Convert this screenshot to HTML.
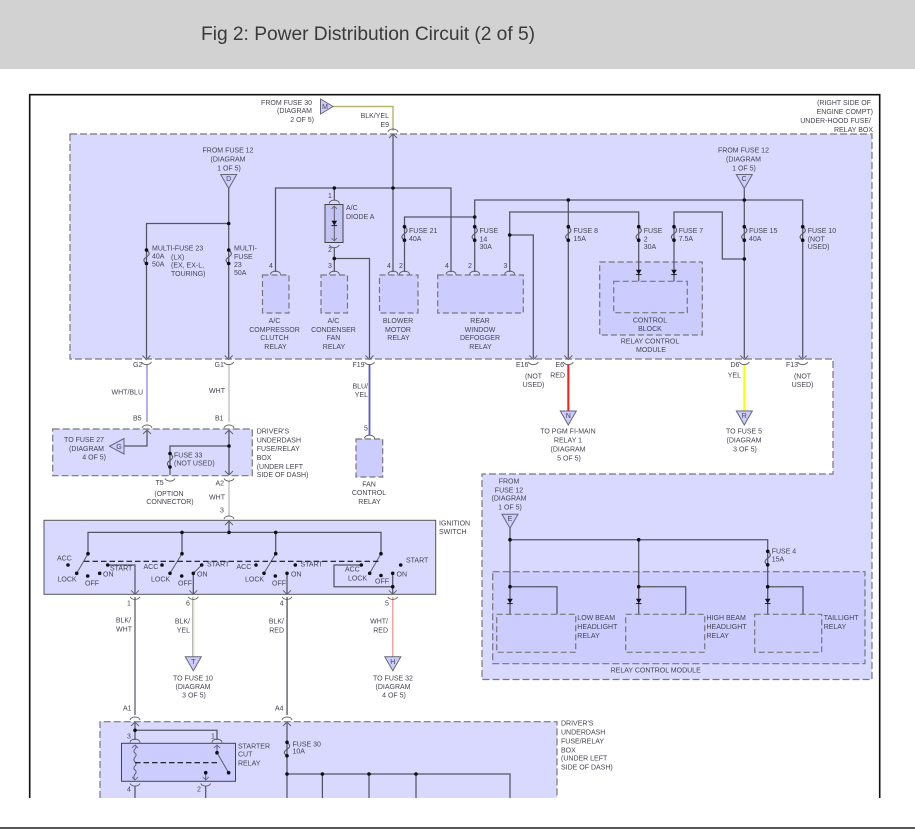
<!DOCTYPE html>
<html><head><meta charset="utf-8"><title>Fig 2: Power Distribution Circuit (2 of 5)</title>
<style>
html,body{margin:0;padding:0;background:#fff;width:915px;height:829px;overflow:hidden}
svg{display:block;filter:blur(.25px)}
text{font-family:"Liberation Sans",Arial,sans-serif;font-size:7px;fill:#444452}
.m{text-anchor:middle}.e{text-anchor:end}
.w{fill:none;stroke:#555561;stroke-width:1.25}
.t{fill:none;stroke:#5c5c6a;stroke-width:1}
.d{stroke:#777;stroke-width:1.2;stroke-dasharray:7 3}
</style></head><body>
<svg width="915" height="829" viewBox="0 0 915 829" xmlns="http://www.w3.org/2000/svg">
<defs>
<g id="up" fill="none" stroke="#5c5c68" stroke-width=".9"><path d="M-5,-2 C-4,-6 4,-6 5,-2"/><path d="M-4,4 L0,0 L4,4"/></g>
<g id="dn" fill="none" stroke="#5c5c68" stroke-width=".9"><path d="M-4,-4 L0,0 L4,-4"/><path d="M-5,2.5 C-3,6 3,6 5,2.5"/></g>
<path id="pin" fill="none" stroke="#5c5c68" stroke-width=".9" d="M-5,3 C-5,-1.5 5,-1.5 5,3"/>
<path id="arcd" fill="none" stroke="#5c5c68" stroke-width=".9" d="M-5,0 C-3,3.5 3,3.5 5,0"/>
<g id="fuse"><path d="M0,0 C4,3 3,5 0,7 C-3,9 -4,11 0,13.5" fill="none" stroke="#5c5c68" stroke-width="1.1"/><circle cx="0" cy="0" r="1.8" fill="#111"/><circle cx="0" cy="13.5" r="1.8" fill="#111"/></g>
<g id="dio"><path d="M-2.8,-2.2 H2.8 L0,2.4Z" fill="#111"/><path d="M-2.8,2.6 H2.8" stroke="#111" stroke-width=".9"/></g>
<path id="tri" d="M-8,0 H8 L0,14Z" fill="#ccccff" stroke="#666674" stroke-width="1"/>
</defs>

<rect x="0" y="0" width="915" height="69" fill="#d2d2d2"/>
<text x="201" y="40" textLength="334" style="font-size:19.2px;fill:#3a3a3a">Fig 2: Power Distribution Circuit (2 of 5)</text>

<rect x="0" y="827" width="915" height="2" fill="#555"/>
<path d="M29.7,798 V94.7 H879.7 V798" fill="none" stroke="#111" stroke-width="1.6"/>

<!-- big shaded boxes -->
<path d="M70,134 H872 V679.5 H482 V474 H833 V359 H70Z" fill="#d9d9ff" class="d"/>
<rect x="52.7" y="429" width="199.6" height="46.7" fill="#d9d9ff" class="d"/>
<rect x="44" y="520.3" width="391.7" height="74" fill="#d9d9ff" stroke="#555" stroke-width="1"/>
<path d="M100,798 V721.7 H557 V798Z" fill="#d9d9ff" stroke="none"/>
<path d="M100,798 V721.7 H557 V798" fill="none" class="d"/>
<rect x="492.7" y="571.7" width="372.3" height="92" fill="#ccccff" class="d"/>

<!-- relay boxes -->
<g fill="#ccccff" class="d" style="stroke-dasharray:6 3">
<rect x="262.5" y="275" width="26.5" height="38"/>
<rect x="321" y="275" width="26.5" height="38"/>
<rect x="379.5" y="275" width="38.5" height="38"/>
<rect x="437.7" y="275" width="85.6" height="38"/>
<rect x="599.7" y="262" width="102.6" height="73"/>
<rect x="613.7" y="281.3" width="73.6" height="31.4"/>
<rect x="356" y="439" width="26.7" height="38"/>
<rect x="496.7" y="614.3" width="79" height="38"/>
<rect x="625.7" y="614.3" width="79" height="38"/>
<rect x="754.7" y="614.3" width="67" height="38"/>
</g>
<rect x="325" y="204.5" width="18" height="38" fill="#c4c4f4" stroke="#444" stroke-width="1"/>
<rect x="121.5" y="743.3" width="114" height="38" fill="#ccccff" stroke="#444" stroke-width="1"/>

<!-- colored wires -->
<path d="M333,106.5 H393 V131" fill="none" stroke="#6a6a50" stroke-width="1.2"/>
<path d="M333,106.5 H393 V131" fill="none" stroke="#ffff80" stroke-width=".5"/>
<path d="M147,365 V422" stroke="#9b9bee" stroke-width="1.6" fill="none"/>
<path d="M229,365 V422 M229,481 V516" stroke="#cfcfcf" stroke-width="1.8" fill="none"/>
<path d="M369.5,365 V435" stroke="#5555dd" stroke-width="1.8" fill="none"/>
<path d="M568.3,365 V411" stroke="#ff1a1a" stroke-width="2" fill="none"/>
<path d="M744.3,365 V411" stroke="#ffff00" stroke-width="2" fill="none"/>
<path d="M135,597 V715" stroke="#8d8d94" stroke-width="1.8" fill="none"/>
<path d="M193.3,597 V657" stroke="#77776a" stroke-width="1.6" fill="none"/>
<path d="M193.6,597 V657" stroke="#ffff66" stroke-width=".9" fill="none"/>
<path d="M287,597 V715" stroke="#8d8d94" stroke-width="1.8" fill="none"/>
<path d="M287.4,597 V715" stroke="#e24a4a" stroke-width=".7" fill="none"/>
<path d="M392.8,597 V657" stroke="#e89090" stroke-width="1.2" fill="none"/>

<!-- black wires -->
<g class="w">
<path d="M393,134 V272 M275.5,272 V188 H451 V272"/>
<path d="M334.3,188 V200 M334.3,248 V272 M334.3,258.5 H369.5 V358"/>
<path d="M404.5,272 V217 H474.7 M474.7,272 V200 H802.7 V358"/>
<path d="M509.7,272 V212 H638.7 V281.3 M509.7,235 H533.3 V358"/>
<path d="M568.3,200 V358 M674,281.3 V212 H722.3 V259 H744.3 M744.3,188 V358"/>
<path d="M228.7,188 V358 M228.7,223.5 H146.5 V358"/>
<path d="M147,430 V446 H124 M229,430 V475 M229,446 H170 V475"/>
<path d="M229,521 V532.4 M88,553.7 V532.4 H381 V553.7 M182,532.4 V553.7 M275.7,532.4 V553.7"/>
<path d="M107.7,565 H135 V594 M193.3,573.3 V594 M287,573.3 V594 M392.7,573.3 V594"/>
<path d="M361.3,565 H334 V586.7 H392.7"/>
<path d="M510,528 V614.3 M510,539.7 H767.7 V614.3 M638.7,539.7 V614.3"/>
<path d="M510,586.7 H557 V614.3 M638.7,586.7 H685.7 V614.3 M767.7,586.7 H803 V614.3"/>
<path d="M135,723 V740 M135,730.3 H217 V740 M135,786 V798 M205.7,786 V798"/>
<path d="M287,723 V798 M287,774 H510 V798 M322.4,774 V798 M369,774 V798 M416,774 V798"/>
</g>
<g class="t">
<path d="M334.3,207 V240"/>
<path d="M76.7,573.3 L88,553.7 M170,573.3 L182,553.7 M264,573.3 L275.7,553.7 M369.7,573.3 L381,553.7 M193.3,573.3 L201.7,565"/>
<path d="M217,746 V752.7 L228.6,772.7 M205.7,772.7 V780"/>
<path d="M135,745 C139,748 131,750 135,753 C139,756 131,758 135,762 C139,765 131,767 135,770 C139,773 131,775 135,780"/>
</g>
<path d="M84,561.3 H380" stroke="#111" stroke-width="1.1" stroke-dasharray="5.5 3" fill="none"/>
<path d="M135,762.7 H220" stroke="#111" stroke-width="1.1" stroke-dasharray="5.5 3" fill="none"/>

<!-- triangles -->
<path d="M320.5,99 L333,106.5 L320.5,114Z" fill="#ccccff" stroke="#666674"/>
<path d="M124,438.5 L109.5,446.3 L124,454Z" fill="#ccccff" stroke="#666674"/>
<use href="#tri" x="228.7" y="174.5"/><use href="#tri" x="744.3" y="174.5"/>
<use href="#tri" x="568.3" y="411"/><use href="#tri" x="744.3" y="411"/>
<use href="#tri" x="510" y="514.3"/><use href="#tri" x="193.3" y="656.7"/><use href="#tri" x="392.8" y="656.7"/>

<!-- connectors -->
<use href="#up" x="393" y="134"/>
<use href="#pin" x="275.5" y="271.5"/><use href="#pin" x="334.3" y="271.5"/><use href="#pin" x="393" y="271.5"/><use href="#pin" x="404.5" y="271.5"/><use href="#pin" x="451" y="271.5"/><use href="#pin" x="474.7" y="271.5"/><use href="#pin" x="509.7" y="271.5"/>
<use href="#pin" x="334.3" y="200.5"/><use href="#arcd" x="334.3" y="245"/>
<path d="M331.5,209 L334.3,206 L337,209 M331.5,238 L334.3,241 L337,238" fill="none" stroke="#5c5c68" stroke-width=".8"/>
<use href="#dn" x="146.5" y="359.5"/><use href="#dn" x="228.7" y="359.5"/><use href="#dn" x="369.5" y="359.5"/><use href="#dn" x="533.3" y="359.5"/><use href="#dn" x="568.3" y="359.5"/><use href="#dn" x="744.3" y="359.5"/><use href="#dn" x="802.7" y="359.5"/>
<use href="#up" x="147" y="430"/><use href="#up" x="229" y="430"/>
<use href="#pin" x="369.5" y="435.5"/>
<path d="M225,471 L229,475 L233,471" fill="none" stroke="#5c5c68" stroke-width=".9"/>
<use href="#arcd" x="170" y="478.5"/><use href="#arcd" x="229" y="478.5"/>
<use href="#up" x="229" y="521"/>
<use href="#dn" x="135" y="594.3"/><use href="#dn" x="193.3" y="594.3"/><use href="#dn" x="287" y="594.3"/><use href="#dn" x="392.8" y="594.3"/>
<use href="#up" x="135" y="722"/><use href="#up" x="287" y="722"/>
<use href="#pin" x="135" y="739.5"/><use href="#pin" x="217" y="739.5"/>
<path d="M132,748 L135,745 L138,748 M214,748 L217,745 L220,748 M132,777 L135,780 L138,777 M202.7,777 L205.7,780 L208.7,777" fill="none" stroke="#5c5c68" stroke-width=".8"/>
<use href="#arcd" x="135" y="783.5"/><use href="#arcd" x="205.7" y="783.5"/>

<!-- fuses -->
<use href="#fuse" x="146.5" y="250"/><use href="#fuse" x="228.7" y="250"/>
<use href="#fuse" x="404.5" y="226.7"/><use href="#fuse" x="474.7" y="226.7"/><use href="#fuse" x="568.3" y="226.7"/><use href="#fuse" x="638.7" y="226.7"/><use href="#fuse" x="674" y="226.7"/><use href="#fuse" x="744.3" y="226.7"/><use href="#fuse" x="802.7" y="226.7"/>
<use href="#fuse" x="170" y="453.5"/><use href="#fuse" x="767.7" y="551.3"/><use href="#fuse" x="287" y="742.3"/>

<!-- diodes -->
<use href="#dio" x="334.3" y="223"/><use href="#dio" x="638.7" y="272"/><use href="#dio" x="674" y="272"/>
<use href="#dio" x="510" y="601"/><use href="#dio" x="638.7" y="601"/><use href="#dio" x="767.7" y="601"/>

<!-- dots -->
<g fill="#111">
<circle cx="334.3" cy="188" r="1.8"/><circle cx="393" cy="188" r="1.8"/><circle cx="334.3" cy="258.5" r="1.8"/>
<circle cx="228.7" cy="223.5" r="1.8"/><circle cx="474.7" cy="217" r="1.8"/><circle cx="568.3" cy="200" r="1.8"/><circle cx="744.3" cy="200" r="1.8"/><circle cx="509.7" cy="235" r="1.8"/><circle cx="744.3" cy="259" r="1.8"/>
<circle cx="229" cy="446" r="1.8"/>
<circle cx="182" cy="532.4" r="1.8"/><circle cx="229" cy="532.4" r="1.8"/><circle cx="275.7" cy="532.4" r="1.8"/>
<circle cx="88" cy="553.7" r="1.8"/><circle cx="182" cy="553.7" r="1.8"/><circle cx="275.7" cy="553.7" r="1.8"/><circle cx="381" cy="553.7" r="1.8"/>
<circle cx="68" cy="565" r="1.8"/><circle cx="76.7" cy="573.3" r="1.8"/><circle cx="87.7" cy="576" r="1.8"/><circle cx="99.7" cy="573.3" r="1.8"/><circle cx="107.7" cy="565" r="1.8"/>
<circle cx="162" cy="565" r="1.8"/><circle cx="170" cy="573.3" r="1.8"/><circle cx="181.7" cy="576" r="1.8"/><circle cx="193.3" cy="573.3" r="1.8"/><circle cx="201.7" cy="565" r="1.8"/>
<circle cx="256" cy="565" r="1.8"/><circle cx="264" cy="573.3" r="1.8"/><circle cx="275.3" cy="576" r="1.8"/><circle cx="287" cy="573.3" r="1.8"/><circle cx="295.3" cy="565" r="1.8"/>
<circle cx="361.3" cy="565" r="1.8"/><circle cx="369.7" cy="573.3" r="1.8"/><circle cx="381" cy="575.5" r="1.8"/><circle cx="392.7" cy="573.3" r="1.8"/><circle cx="392.7" cy="586.7" r="1.8"/><circle cx="400.7" cy="565" r="1.8"/>
<circle cx="510" cy="539.7" r="1.8"/><circle cx="638.7" cy="539.7" r="1.8"/><circle cx="510" cy="586.7" r="1.8"/><circle cx="638.7" cy="586.7" r="1.8"/><circle cx="767.7" cy="586.7" r="1.8"/>
<circle cx="135" cy="730.3" r="1.8"/><circle cx="217" cy="752.7" r="1.8"/><circle cx="228.6" cy="772.7" r="1.8"/><circle cx="205.7" cy="772.7" r="1.8"/>
<circle cx="287" cy="774" r="1.8"/><circle cx="322.4" cy="774" r="1.8"/><circle cx="369" cy="774" r="1.8"/><circle cx="416" cy="774" r="1.8"/>
</g>

<!-- labels: top -->
<text x="312" y="105" class="e">FROM FUSE 30</text><text x="312" y="113" class="e">(DIAGRAM</text><text x="314" y="122" class="e">2 OF 5)</text>
<text x="325" y="109" class="m">M</text>
<text x="389" y="118" class="e">BLK/YEL</text><text x="389" y="127" class="e">E9</text>
<text x="871" y="105" class="e">(RIGHT SIDE OF</text><text x="873" y="114" class="e">ENGINE COMPT)</text><text x="871" y="123" class="e">UNDER-HOOD FUSE/</text><text x="873" y="132" class="e">RELAY BOX</text>
<text x="228" y="152.7" class="m">FROM FUSE 12</text><text x="228" y="161.7" class="m">(DIAGRAM</text><text x="229" y="170.7" class="m">1 OF 5)</text><text x="228.7" y="181" class="m">D</text>
<text x="743.5" y="152.7" class="m">FROM FUSE 12</text><text x="743.5" y="161.7" class="m">(DIAGRAM</text><text x="744" y="170.7" class="m">1 OF 5)</text><text x="744" y="181" class="m">C</text>
<text x="152" y="250.5">MULTI-FUSE 23</text><text x="152" y="258.7">40A</text><text x="152" y="266.5">50A</text><text x="171" y="259.5">(LX)</text><text x="171" y="267.5">(EX, EX-L,</text><text x="171" y="276">TOURING)</text>
<text x="234" y="250.5">MULTI-</text><text x="234" y="259">FUSE</text><text x="234" y="267">23</text><text x="234" y="275">50A</text>
<text x="328" y="198">1</text><text x="346" y="210">A/C</text><text x="346" y="219">DIODE A</text><text x="328" y="252">2</text>
<text x="269" y="268">4</text><text x="328" y="268">3</text><text x="387" y="268">4</text><text x="399" y="268">2</text><text x="445" y="268">4</text><text x="468" y="268">2</text><text x="503.5" y="268">3</text>
<text x="409" y="233">FUSE 21</text><text x="409" y="241">40A</text>
<text x="479.5" y="233">FUSE</text><text x="479.5" y="241.5">14</text><text x="479.5" y="249">30A</text>
<text x="573.5" y="233">FUSE 8</text><text x="573.5" y="241">15A</text>
<text x="643.7" y="233">FUSE</text><text x="643.7" y="241.5">2</text><text x="643.7" y="249">30A</text>
<text x="678.7" y="233">FUSE 7</text><text x="678.7" y="241">7.5A</text>
<text x="749" y="233">FUSE 15</text><text x="749" y="241">40A</text>
<text x="807.7" y="233">FUSE 10</text><text x="807.7" y="241.5">(NOT</text><text x="807.7" y="249">USED)</text>
<text x="274.5" y="323" class="m">A/C</text><text x="274.5" y="332" class="m">COMPRESSOR</text><text x="274.5" y="340" class="m">CLUTCH</text><text x="275.5" y="349" class="m">RELAY</text>
<text x="333.5" y="323" class="m">A/C</text><text x="333.5" y="332" class="m">CONDENSER</text><text x="333.5" y="340" class="m">FAN</text><text x="334" y="349" class="m">RELAY</text>
<text x="398" y="323" class="m">BLOWER</text><text x="398" y="332" class="m">MOTOR</text><text x="398.5" y="340" class="m">RELAY</text>
<text x="480" y="323" class="m">REAR</text><text x="480" y="332" class="m">WINDOW</text><text x="480" y="340" class="m">DEFOGGER</text><text x="480.5" y="349" class="m">RELAY</text>
<text x="650" y="322.7" class="m">CONTROL</text><text x="650" y="331" class="m">BLOCK</text><text x="650" y="343.7" class="m">RELAY CONTROL</text><text x="651" y="352" class="m">MODULE</text>

<!-- labels: connectors -->
<text x="133" y="367">G2</text><text x="214.5" y="367">G1</text><text x="352.5" y="367">F19</text><text x="516" y="367">E16</text><text x="555.5" y="367">E6</text><text x="730.5" y="367">D6</text><text x="786" y="367">F13</text>
<text x="143" y="394.3" class="e">WHT/BLU</text><text x="225" y="393" class="e">WHT</text>
<text x="368" y="388.7" class="e">BLU/</text><text x="368" y="397" class="e">YEL</text>
<text x="533.5" y="378.7" class="m">(NOT</text><text x="533.5" y="387" class="m">USED)</text><text x="565" y="377.7" class="e">RED</text><text x="741" y="377.7" class="e">YEL</text><text x="802.5" y="378.7" class="m">(NOT</text><text x="802.5" y="387" class="m">USED)</text>
<text x="568.3" y="418" class="m">N</text><text x="744.3" y="418" class="m">R</text>
<text x="568" y="433.7" class="m">TO PGM FI-MAIN</text><text x="568" y="442.7" class="m">RELAY 1</text><text x="568" y="451.7" class="m">(DIAGRAM</text><text x="569" y="460.7" class="m">5 OF 5)</text>
<text x="744" y="433.7" class="m">TO FUSE 5</text><text x="744" y="442.7" class="m">(DIAGRAM</text><text x="745" y="451.7" class="m">3 OF 5)</text>
<text x="133" y="420.7">B5</text><text x="215" y="420.7">B1</text><text x="364" y="430.3">5</text>
<text x="104" y="442" class="e">TO FUSE 27</text><text x="104" y="451" class="e">(DIAGRAM</text><text x="106" y="459.5" class="e">4 OF 5)</text><text x="119" y="449" class="m">G</text>
<text x="174" y="457.7">FUSE 33</text><text x="174" y="465.7">(NOT USED)</text>
<text x="256.7" y="433.7">DRIVER'S</text><text x="256.7" y="442.7">UNDERDASH</text><text x="256.7" y="451">FUSE/RELAY</text><text x="256.7" y="460">BOX</text><text x="256.7" y="469">(UNDER LEFT</text><text x="256.7" y="477">SIDE OF DASH)</text>
<text x="155.5" y="485">T5</text><text x="215.5" y="485.7">A2</text>
<text x="169" y="496" class="m">(OPTION</text><text x="170" y="504" class="m">CONNECTOR)</text>
<text x="225" y="499.3" class="e">WHT</text><text x="220" y="512.3">3</text>
<text x="369" y="486.7" class="m">FAN</text><text x="369" y="495" class="m">CONTROL</text><text x="369.5" y="504" class="m">RELAY</text>
<text x="439" y="525.7">IGNITION</text><text x="439" y="534">SWITCH</text>

<!-- ignition labels -->
<text x="57" y="560.3">ACC</text><text x="57.5" y="581.7">LOCK</text><text x="85" y="585.7">OFF</text><text x="103" y="576.7">ON</text><text x="110" y="570.3">START</text>
<text x="143.5" y="569">ACC</text><text x="151" y="581.7">LOCK</text><text x="178" y="585.7">OFF</text><text x="197" y="576.7">ON</text><text x="207" y="566.7">START</text>
<text x="236.5" y="569">ACC</text><text x="245" y="581.7">LOCK</text><text x="272" y="585.7">OFF</text><text x="291" y="576.7">ON</text><text x="300.5" y="566.7">START</text>
<text x="345" y="571.7">ACC</text><text x="348" y="580.7">LOCK</text><text x="375" y="583.3">OFF</text><text x="396.5" y="576.7">ON</text><text x="406" y="562.7">START</text>

<!-- below ignition -->
<text x="127" y="605.7">1</text><text x="186" y="605.7">6</text><text x="279.7" y="605.7">4</text><text x="385" y="605.7">5</text>
<text x="131" y="622.7" class="e">BLK/</text><text x="132" y="631.7" class="e">WHT</text>
<text x="190" y="623.7" class="e">BLK/</text><text x="190" y="632.7" class="e">YEL</text>
<text x="284" y="623.7" class="e">BLK/</text><text x="284" y="632.7" class="e">RED</text>
<text x="388" y="623.7" class="e">WHT/</text><text x="388" y="632.7" class="e">RED</text>
<text x="193.3" y="664" class="m">T</text><text x="392.8" y="664" class="m">H</text>
<text x="193" y="680.7" class="m">TO FUSE 10</text><text x="193" y="689" class="m">(DIAGRAM</text><text x="194" y="697.7" class="m">3 OF 5)</text>
<text x="393" y="680.7" class="m">TO FUSE 32</text><text x="393" y="689" class="m">(DIAGRAM</text><text x="394" y="697.7" class="m">4 OF 5)</text>
<text x="123" y="710.7">A1</text><text x="275" y="710.7">A4</text>
<text x="561" y="725.7">DRIVER'S</text><text x="561" y="734.7">UNDERDASH</text><text x="561" y="743.7">FUSE/RELAY</text><text x="561" y="752.7">BOX</text><text x="561" y="760.7">(UNDER LEFT</text><text x="561" y="769.7">SIDE OF DASH)</text>
<text x="127" y="738.3">3</text><text x="211" y="738.3">1</text><text x="127" y="791.3">4</text><text x="197" y="791.3">2</text>
<text x="238" y="748.7">STARTER</text><text x="238" y="756.7">CUT</text><text x="238" y="765.7">RELAY</text>
<text x="292.5" y="746.7">FUSE 30</text><text x="292.5" y="753.7">10A</text>

<!-- lower right -->
<text x="509" y="483.7" class="m">FROM</text><text x="509" y="492.7" class="m">FUSE 12</text><text x="509" y="500.7" class="m">(DIAGRAM</text><text x="510" y="509.7" class="m">1 OF 5)</text><text x="510" y="521" class="m">E</text>
<text x="771.7" y="553.7">FUSE 4</text><text x="771.7" y="561.7">15A</text>
<text x="577.3" y="620">LOW BEAM</text><text x="577.3" y="629">HEADLIGHT</text><text x="577.3" y="638">RELAY</text>
<text x="706.5" y="620">HIGH BEAM</text><text x="706.5" y="629">HEADLIGHT</text><text x="706.5" y="638">RELAY</text>
<text x="823.7" y="620">TAILLIGHT</text><text x="823.7" y="629">RELAY</text>
<text x="655.7" y="672.7" class="m">RELAY CONTROL MODULE</text>
</svg>
</body></html>
